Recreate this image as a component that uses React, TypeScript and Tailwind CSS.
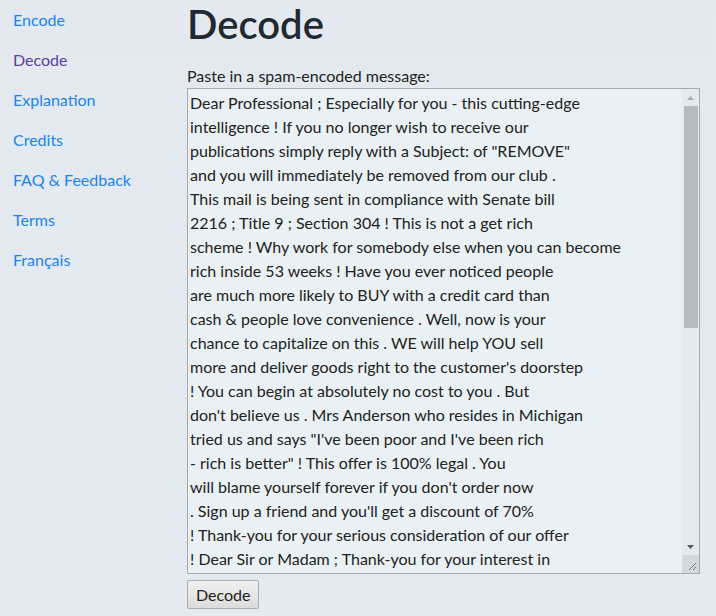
const navLinks = [
  { label: "Encode", visited: false },
  { label: "Decode", visited: true },
  { label: "Explanation", visited: false },
  { label: "Credits", visited: false },
  { label: "FAQ & Feedback", visited: false },
  { label: "Terms", visited: false },
  { label: "Français", visited: false },
];

const message = [
  "Dear Professional ; Especially for you - this cutting-edge",
  "intelligence ! If you no longer wish to receive our",
  'publications simply reply with a Subject: of "REMOVE"',
  "and you will immediately be removed from our club .",
  "This mail is being sent in compliance with Senate bill",
  "2216 ; Title 9 ; Section 304 ! This is not a get rich",
  "scheme ! Why work for somebody else when you can become",
  "rich inside 53 weeks ! Have you ever noticed people",
  "are much more likely to BUY with a credit card than",
  "cash & people love convenience . Well, now is your",
  "chance to capitalize on this . WE will help YOU sell",
  "more and deliver goods right to the customer's doorstep",
  "! You can begin at absolutely no cost to you . But",
  "don't believe us . Mrs Anderson who resides in Michigan",
  'tried us and says "I\'ve been poor and I\'ve been rich',
  '- rich is better" ! This offer is 100% legal . You',
  "will blame yourself forever if you don't order now",
  ". Sign up a friend and you'll get a discount of 70%",
  "! Thank-you for your serious consideration of our offer",
  "! Dear Sir or Madam ; Thank-you for your interest in",
  "our letter . If you are not interested in our publications",
  "and wish to be removed from our lists, simply do NOT",
  "respond and ignore this mail ! This mail is being sent",
].join("\n");

function ScrollArrow({ down }: { down?: boolean }) {
  return (
    <div className="h-[17px] flex items-center justify-center">
      <svg width="7" height="4" viewBox="0 0 7 4">
        <path d={down ? "M0 0h7L3.5 4z" : "M0 4h7L3.5 0z"} fill={down ? "#505659" : "#a9b0b3"} />
      </svg>
    </div>
  );
}

export default function App() {
  return (
    <div
      className="min-h-screen w-full bg-gradient-to-b from-[#e3e9ef] to-[#e4ebf0] text-[#222] flex"
      style={{ fontFamily: "Lato, sans-serif" }}
    >
      {/* Sidebar nav */}
      <nav className="w-[187px] shrink-0 pt-2 pl-[13px] flex flex-col gap-4">
        {navLinks.map((l) => (
          <a
            key={l.label}
            href="#"
            className={`text-base leading-6 ${l.visited ? "text-[#5e3e9e]" : "text-[#1a83ef]"}`}
          >
            {l.label}
          </a>
        ))}
      </nav>

      {/* Main */}
      <main className="flex flex-col w-[513px]">
        <h1 className="text-[40px] leading-[48px] font-semibold text-[#212a33]">Decode</h1>
        <label className="mt-4 text-base leading-6">Paste in a spam-encoded message:</label>

        <div className="h-[486px] border border-[#a3abae] bg-[#e9f1f4] flex">
          <textarea
            className="flex-1 h-full resize-none overflow-hidden whitespace-pre bg-transparent pl-0.5 pt-0.5 text-base leading-6 text-[#222] outline-none"
            wrap="off"
            defaultValue={message}
          />
          <div className="w-[17px] shrink-0 bg-[#e4ebee] flex flex-col">
            <ScrollArrow />
            <div className="h-[222px] ml-0.5 mr-px bg-[#b5bcbf]" />
            <div className="flex-1" />
            <ScrollArrow down />
            <div className="h-[18px] bg-[#d3d9dc] flex items-end justify-end p-0.5">
              <svg width="10" height="10" viewBox="0 0 10 10">
                <path d="M9 2L2 9M9 6L6 9" stroke="#6e7477" strokeWidth="1" />
              </svg>
            </div>
          </div>
        </div>

        <div className="mt-1.5">
          <button className="h-[29px] px-2 text-base text-[#222] border border-[#adadad] rounded-[2px] bg-gradient-to-b from-[#f1f1f1] to-[#dcdcdc]">
            Decode
          </button>
        </div>
      </main>
    </div>
  );
}
